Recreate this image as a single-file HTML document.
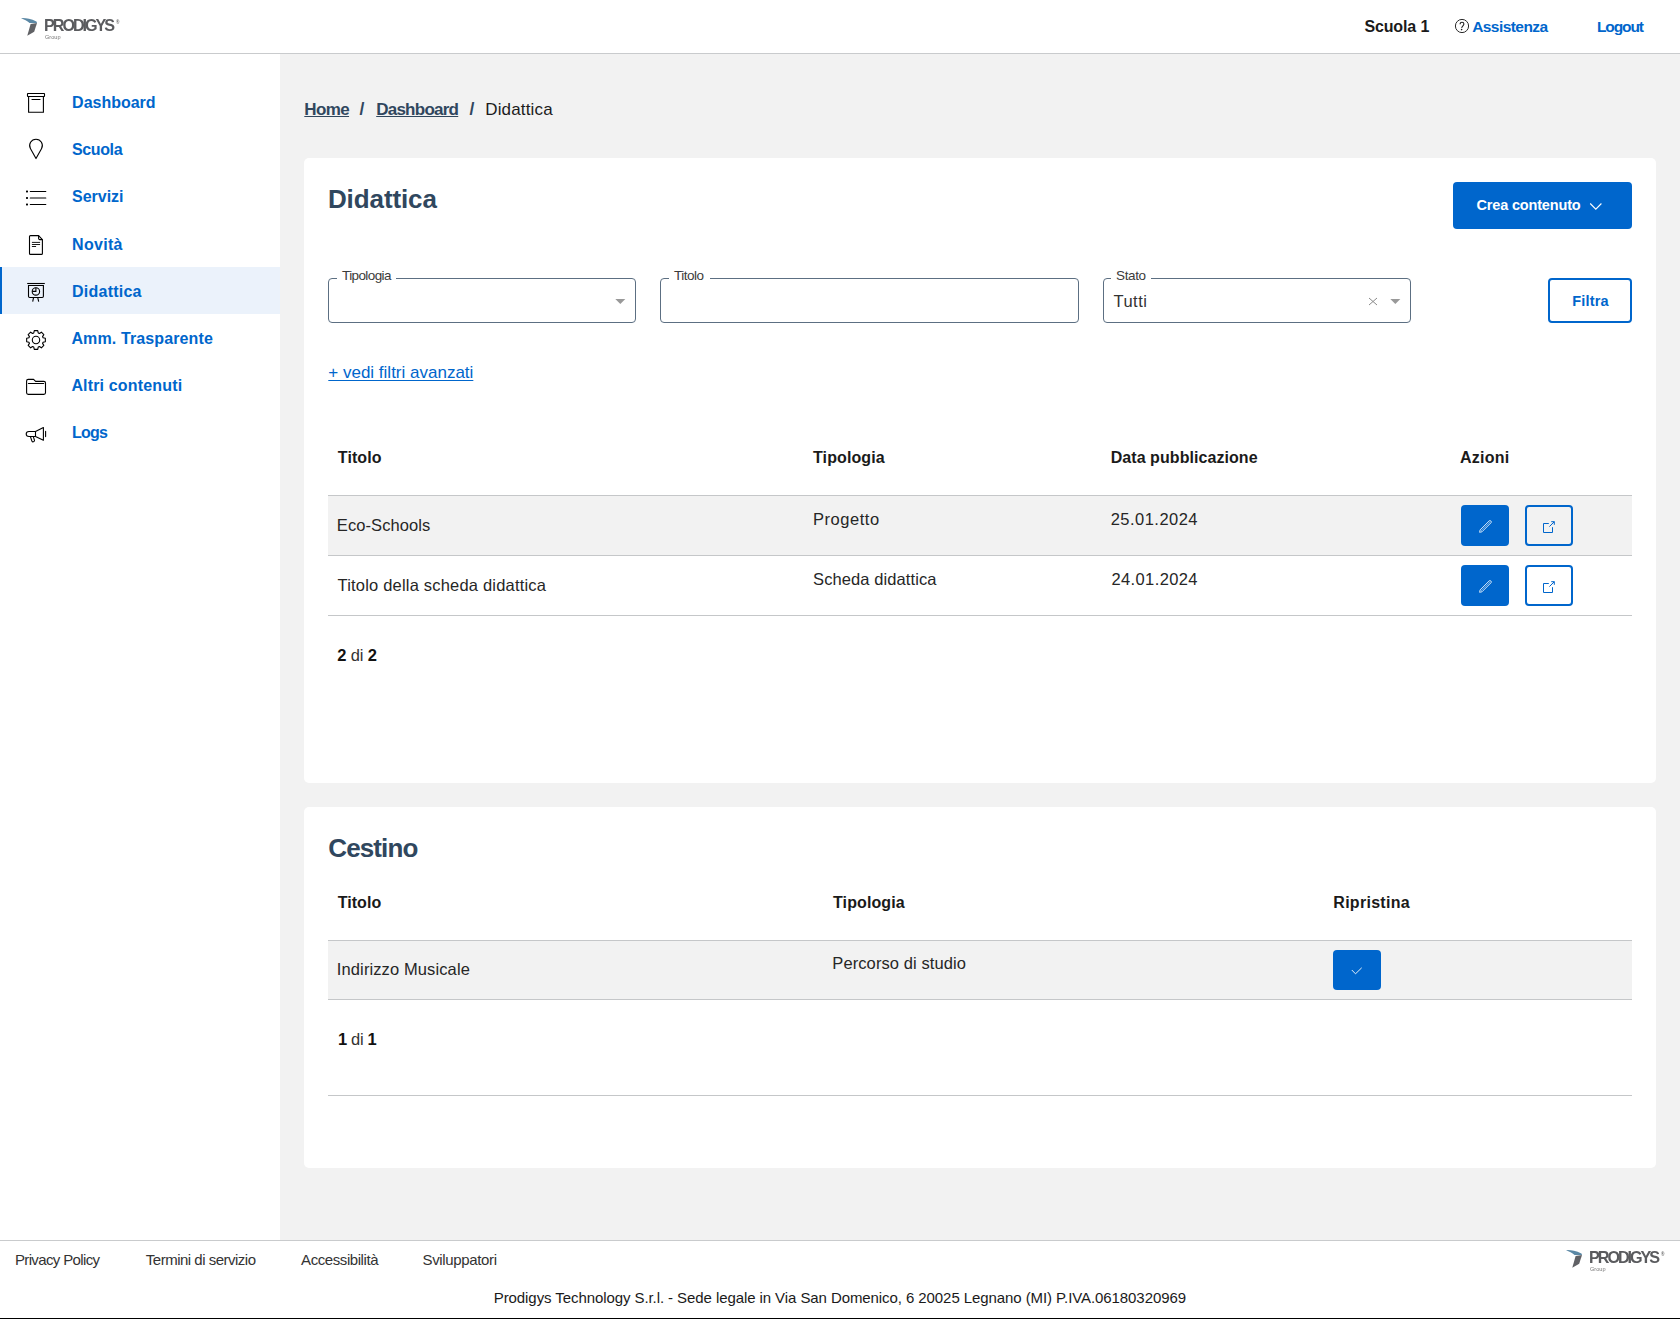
<!DOCTYPE html>
<html lang="it"><head><meta charset="utf-8"><title>Didattica</title><style>
*{margin:0;padding:0;box-sizing:border-box}
html,body{width:1680px;height:1319px;overflow:hidden;background:#fff}
body{font-family:"Liberation Sans",sans-serif;position:relative}
.t{position:absolute;white-space:nowrap}
.a{position:absolute}
.card{position:absolute;background:#fff;border-radius:5px}
.fld{position:absolute;border:1px solid #5c6f82;border-radius:4px;background:#fff}
.notch{position:absolute;background:#fff;height:3px}
.btnf{position:absolute;background:#0066cc;border-radius:4px}
.btno{position:absolute;border:2px solid #0066cc;border-radius:4px}
.hl{position:absolute;height:1px;background:#c5c7c9}
</style></head><body>
<div class="a" style="left:0;top:0;width:1680px;height:53px;background:#fff"></div>
<div class="a" style="left:0;top:53px;width:1680px;height:1px;background:#c9cbcd"></div>
<div class="a" style="left:280px;top:54px;width:1400px;height:1186px;background:#f2f2f2"></div>
<div class="a" style="left:0;top:1240px;width:1680px;height:1px;background:#c9cbcd"></div>
<div class="a" style="left:0;top:1318px;width:1680px;height:1px;background:#000"></div>
<svg class="a" style="left:20px;top:14px;will-change:transform" width="102" height="28" viewBox="-1 -3 102 28"><path d="M0 1.1 C3.5 0.7 9.5 1.6 15.4 4.4 C15.9 4.7 16 5.3 15.9 5.9 L8.6 6.1 C6.2 4.1 3.2 2.6 0 1.1Z" fill="#5b88a5"/><path d="M9.6 6.9 L16 5.9 L13.2 14.8 L6.3 18.7 Z" fill="#606165"/><text x="23.1" y="14" font-family="Liberation Sans" font-weight="700" font-size="16.2" fill="#5a5b5e" textLength="71" lengthAdjust="spacing">PRODIGYS</text><text x="94.9" y="6.9" font-family="Liberation Sans" font-weight="700" font-size="4.6" fill="#6a6a6a">&#174;</text><text x="24" y="21.9" font-family="Liberation Sans" font-size="5.6" fill="#777" textLength="15.6" lengthAdjust="spacingAndGlyphs">Group</text></svg>
<div class="t" style="left:1364.40px;top:17.00px;font-size:16px;line-height:20px;font-weight:700;color:#1a1a1a;letter-spacing:-0.121px;">Scuola 1</div>
<svg class="a" style="left:1454px;top:18px" width="16" height="16" viewBox="0 0 16 16"><circle cx="8" cy="8" r="6.6" fill="none" stroke="#2a2a2a" stroke-width="1"/><path d="M6.1 6.2 C6.1 4.9 7 4.3 8 4.3 C9.1 4.3 9.9 5.1 9.9 6.1 C9.9 7.5 8.1 8 7.6 9.9" fill="none" stroke="#1a1a1a" stroke-width="1.05"/><circle cx="7.6" cy="11.6" r="0.8" fill="#1a1a1a"/></svg>
<div class="t" style="left:1472.17px;top:17.00px;font-size:15.5px;line-height:19px;font-weight:700;color:#0066cc;letter-spacing:-0.556px;">Assistenza</div>
<div class="t" style="left:1596.95px;top:17.01px;font-size:15.5px;line-height:19px;font-weight:700;color:#0066cc;letter-spacing:-1.090px;">Logout</div>
<div class="a" style="left:0;top:267px;width:280px;height:47px;background:#ebf2fb"></div>
<div class="a" style="left:0;top:267px;width:2px;height:47px;background:#0066cc"></div>
<div class="t" style="left:72.10px;top:93.00px;font-size:16px;line-height:20px;font-weight:700;color:#0066cc;letter-spacing:-0.019px;">Dashboard</div>
<div class="t" style="left:72.10px;top:140.00px;font-size:16px;line-height:20px;font-weight:700;color:#0066cc;letter-spacing:-0.400px;">Scuola</div>
<div class="t" style="left:72.10px;top:187.00px;font-size:16px;line-height:20px;font-weight:700;color:#0066cc;letter-spacing:-0.033px;">Servizi</div>
<div class="t" style="left:72.10px;top:235.00px;font-size:16px;line-height:20px;font-weight:700;color:#0066cc;letter-spacing:0.290px;">Novità</div>
<div class="t" style="left:72.10px;top:282.00px;font-size:16px;line-height:20px;font-weight:700;color:#0066cc;letter-spacing:0.219px;">Didattica</div>
<div class="t" style="left:71.40px;top:329.01px;font-size:16px;line-height:20px;font-weight:700;color:#0066cc;letter-spacing:0.120px;">Amm. Trasparente</div>
<div class="t" style="left:71.40px;top:376.00px;font-size:16px;line-height:20px;font-weight:700;color:#0066cc;letter-spacing:0.161px;">Altri contenuti</div>
<div class="t" style="left:72.10px;top:423.01px;font-size:16px;line-height:20px;font-weight:700;color:#0066cc;letter-spacing:-0.833px;">Logs</div>
<svg class="a" style="left:0;top:0" width="60" height="460" viewBox="0 0 60 460"><rect x="27.5" y="93.5" width="17" height="3" rx="0.4" fill="none" stroke="#000" stroke-width="1.1"/><path d="M28.6 96.5 V112.3 H43.4 V96.5" fill="none" stroke="#000" stroke-width="1.1"/><path d="M32 99.5 H40" fill="none" stroke="#000" stroke-width="1.1" stroke-linecap="round"/><path d="M36 158.6 L30.4 148.6 A6.35 6.35 0 1 1 41.6 148.6 Z" fill="none" stroke="#000" stroke-width="1.1" stroke-linejoin="round"/><rect x="26" y="190.6" width="2" height="1.8" rx="0.6" fill="#000"/><rect x="26" y="197.1" width="2" height="1.8" rx="0.6" fill="#000"/><rect x="26" y="203.6" width="2" height="1.8" rx="0.6" fill="#000"/><path d="M30.3 191.5 H45.8 M30.3 198 H45.8 M30.3 204.5 H45.8" fill="none" stroke="#000" stroke-width="1.1" stroke-linecap="round"/><path d="M30.5 235.6 H38.6 L42.4 239.6 V253.4 A1 1 0 0 1 41.4 254.4 H30.5 A1 1 0 0 1 29.5 253.4 V236.6 A1 1 0 0 1 30.5 235.6 Z" fill="none" stroke="#000" stroke-width="1.1" stroke-linejoin="round"/><path d="M38.6 235.6 V238.2 A1.2 1.2 0 0 0 39.8 239.6 H42.4" fill="none" stroke="#000" stroke-width="1.1"/><path d="M32.3 242.4 H39.7 M32.3 244.5 H39.7 M32.3 246.5 H35.7" fill="none" stroke="#000" stroke-width="0.9" stroke-linecap="round"/><path d="M27.2 283.5 H44.8" fill="none" stroke="#000" stroke-width="1.1"/><path d="M28.5 285.5 H43.4 V296.3 A1.2 1.2 0 0 1 42.2 297.5 H29.7 A1.2 1.2 0 0 1 28.5 296.3 Z" fill="none" stroke="#000" stroke-width="1.1"/><circle cx="35.9" cy="291.4" r="3.7" fill="none" stroke="#000" stroke-width="1.1"/><path d="M35.9 287.8 V291.4 H32.3" fill="none" stroke="#000" stroke-width="1.1"/><path d="M33.5 297.8 L32.7 301.6 M37.8 297.8 L38.7 301.6" fill="none" stroke="#000" stroke-width="1.1"/><path d="M33.77 332.94 L34.27 330.66 L37.73 330.66 L38.23 332.94 L39.42 333.44 L41.38 332.17 L43.83 334.62 L42.56 336.58 L43.06 337.77 L45.34 338.27 L45.34 341.73 L43.06 342.23 L42.56 343.42 L43.83 345.38 L41.38 347.83 L39.42 346.56 L38.23 347.06 L37.73 349.34 L34.27 349.34 L33.77 347.06 L32.58 346.56 L30.62 347.83 L28.17 345.38 L29.44 343.42 L28.94 342.23 L26.66 341.73 L26.66 338.27 L28.94 337.77 L29.44 336.58 L28.17 334.62 L30.62 332.17 L32.58 333.44Z" fill="none" stroke="#000" stroke-width="1.1" stroke-linejoin="round"/><circle cx="36" cy="340" r="3.7" fill="none" stroke="#000" stroke-width="1.1"/><path d="M26.6 381 A1.6 1.6 0 0 1 28.2 379.4 H33.6 L35.6 381.4 H43.9 A1.6 1.6 0 0 1 45.5 383 V392.8 A1.6 1.6 0 0 1 43.9 394.4 H28.2 A1.6 1.6 0 0 1 26.6 392.8 Z" fill="none" stroke="#000" stroke-width="1.1" stroke-linejoin="round"/><path d="M28.4 383.5 H43.7" fill="none" stroke="#000" stroke-width="1.1" stroke-linecap="round"/><path d="M35.5 431.5 L43.4 427.5 V440.3 L35.5 436.5 Z" fill="none" stroke="#000" stroke-width="1.1" stroke-linejoin="round"/><path d="M35.5 431.5 H29 A2.8 2.5 0 0 0 29 436.5 H35.5" fill="none" stroke="#000" stroke-width="1.1"/><path d="M45.6 431.4 V436.6" fill="none" stroke="#000" stroke-width="1.1" stroke-linecap="round"/><path d="M30.5 436.8 L31.9 441 A1.35 1.35 0 0 0 34.5 440.4 L33.4 436.8" fill="none" stroke="#000" stroke-width="1.1"/></svg>
<div class="t" style="left:304.30px;top:99.01px;font-size:17px;line-height:21px;font-weight:700;color:#30475e;letter-spacing:-0.617px;text-decoration:underline;text-underline-offset:1px;text-decoration-thickness:1px;">Home</div>
<div class="t" style="left:359.50px;top:98.01px;font-size:17.5px;line-height:22px;font-weight:700;color:#30475e;">/</div>
<div class="t" style="left:376.20px;top:99.01px;font-size:17px;line-height:21px;font-weight:700;color:#30475e;letter-spacing:-0.750px;text-decoration:underline;text-underline-offset:1px;text-decoration-thickness:1px;">Dashboard</div>
<div class="t" style="left:469.50px;top:98.01px;font-size:17.5px;line-height:22px;font-weight:700;color:#30475e;">/</div>
<div class="t" style="left:485.25px;top:99.01px;font-size:17px;line-height:21px;color:#1c1c1c;letter-spacing:0.156px;">Didattica</div>
<div class="card" style="left:304px;top:158px;width:1352px;height:625px"></div>
<div class="t" style="left:327.95px;top:183.02px;font-size:26px;line-height:32px;font-weight:700;color:#30475e;letter-spacing:-0.100px;">Didattica</div>
<div class="btnf" style="left:1453px;top:182px;width:179px;height:47px"></div>
<div class="t" style="left:1476.55px;top:196.01px;font-size:14.5px;line-height:18px;font-weight:700;color:#fff;letter-spacing:-0.173px;">Crea contenuto</div>
<svg class="a" style="left:1589px;top:202px" width="14" height="9" viewBox="0 0 14 9"><path d="M1.2 1.5 L6.8 7.2 L12.4 1.5" fill="none" stroke="#fff" stroke-width="1.1"/></svg>
<div class="fld" style="left:328px;top:278px;width:308px;height:45px"></div>
<div class="notch" style="left:337px;top:277px;width:59px"></div>
<div class="t" style="left:342.00px;top:267.00px;font-size:13.5px;line-height:17px;color:#3b3b3b;letter-spacing:-0.600px;">Tipologia</div>
<div class="fld" style="left:660px;top:278px;width:419px;height:45px"></div>
<div class="notch" style="left:669px;top:277px;width:41px"></div>
<div class="t" style="left:674.00px;top:267.00px;font-size:13.5px;line-height:17px;color:#3b3b3b;letter-spacing:-0.500px;">Titolo</div>
<div class="fld" style="left:1103px;top:278px;width:308px;height:45px"></div>
<div class="notch" style="left:1111px;top:277px;width:40px"></div>
<div class="t" style="left:1116.10px;top:267.00px;font-size:13.5px;line-height:17px;color:#3b3b3b;letter-spacing:-0.388px;">Stato</div>
<svg class="a" style="left:614.5px;top:298px" width="11" height="7" viewBox="0 0 11 7"><path d="M0.3 1 H10.3 L5.3 6 Z" fill="#999"/></svg>
<svg class="a" style="left:1389.5px;top:298px" width="11" height="7" viewBox="0 0 11 7"><path d="M0.3 1 H10.3 L5.3 6 Z" fill="#999"/></svg>
<svg class="a" style="left:1368px;top:297px" width="10" height="9" viewBox="0 0 10 9"><path d="M1 1 L9 8 M9 1 L1 8" fill="none" stroke="#8a8a8a" stroke-width="1"/></svg>
<div class="t" style="left:1113.50px;top:291.00px;font-size:16.5px;line-height:21px;color:#333;letter-spacing:0.475px;">Tutti</div>
<div class="btno" style="left:1548px;top:278px;width:84px;height:45px"></div>
<div class="t" style="left:1572.30px;top:292.01px;font-size:14.5px;line-height:18px;font-weight:700;color:#0066cc;letter-spacing:0.160px;">Filtra</div>
<div class="t" style="left:328.30px;top:362.00px;font-size:17px;line-height:21px;color:#0066cc;text-decoration:underline;text-underline-offset:2px;text-decoration-thickness:1px;">+ vedi filtri avanzati</div>
<div class="t" style="left:337.85px;top:448.00px;font-size:16px;line-height:20px;font-weight:700;color:#1a1a1a;letter-spacing:0.070px;">Titolo</div>
<div class="t" style="left:813.00px;top:448.00px;font-size:16px;line-height:20px;font-weight:700;color:#1a1a1a;letter-spacing:0.100px;">Tipologia</div>
<div class="t" style="left:1110.70px;top:448.00px;font-size:16px;line-height:20px;font-weight:700;color:#1a1a1a;letter-spacing:0.062px;">Data pubblicazione</div>
<div class="t" style="left:1460.00px;top:448.00px;font-size:16px;line-height:20px;font-weight:700;color:#1a1a1a;letter-spacing:0.260px;">Azioni</div>
<div class="a" style="left:328px;top:496px;width:1304px;height:59px;background:#f2f2f2"></div>
<div class="hl" style="left:328px;top:495px;width:1304px"></div>
<div class="hl" style="left:328px;top:555px;width:1304px"></div>
<div class="hl" style="left:328px;top:615px;width:1304px"></div>
<div class="t" style="left:336.85px;top:515.01px;font-size:16.5px;line-height:21px;color:#262626;letter-spacing:0.075px;">Eco-Schools</div>
<div class="t" style="left:813.10px;top:509.02px;font-size:16.5px;line-height:21px;color:#262626;letter-spacing:0.514px;">Progetto</div>
<div class="t" style="left:1110.70px;top:509.02px;font-size:16.5px;line-height:21px;color:#262626;letter-spacing:0.472px;">25.01.2024</div>
<div class="btnf" style="left:1461px;top:505px;width:48px;height:41px"></div>
<svg class="a" style="left:1478px;top:519px" width="16" height="16" viewBox="0 0 16 16"><path d="M1.6 13.3 L2.1 10.9 L11.1 1.9 A1.35 1.35 0 0 1 13 3.8 L4 12.8 Z" fill="none" stroke="#fff" stroke-width="0.8" stroke-linejoin="round"/><path d="M3.05 11.85 L12.05 2.85" fill="none" stroke="#fff" stroke-width="0.7" stroke-opacity="0.7"/></svg>
<div class="btno" style="left:1525px;top:505px;width:48px;height:41px"></div>
<svg class="a" style="left:1542px;top:519px" width="14" height="14" viewBox="0 0 14 14"><path d="M6.8 4.5 H1.5 V13.5 H10.5 V8.2" fill="none" stroke="#0066cc" stroke-width="1"/><path d="M7.4 7.6 L12.3 2.7 M9.2 2.7 H12.3 V5.8" fill="none" stroke="#0066cc" stroke-width="1"/></svg>
<div class="t" style="left:337.55px;top:575.00px;font-size:16.5px;line-height:21px;color:#262626;letter-spacing:0.191px;">Titolo della scheda didattica</div>
<div class="t" style="left:813.10px;top:569.01px;font-size:16.5px;line-height:21px;color:#262626;letter-spacing:0.090px;">Scheda didattica</div>
<div class="t" style="left:1111.40px;top:569.01px;font-size:16.5px;line-height:21px;color:#262626;letter-spacing:0.394px;">24.01.2024</div>
<div class="btnf" style="left:1461px;top:565px;width:48px;height:41px"></div>
<svg class="a" style="left:1478px;top:579px" width="16" height="16" viewBox="0 0 16 16"><path d="M1.6 13.3 L2.1 10.9 L11.1 1.9 A1.35 1.35 0 0 1 13 3.8 L4 12.8 Z" fill="none" stroke="#fff" stroke-width="0.8" stroke-linejoin="round"/><path d="M3.05 11.85 L12.05 2.85" fill="none" stroke="#fff" stroke-width="0.7" stroke-opacity="0.7"/></svg>
<div class="btno" style="left:1525px;top:565px;width:48px;height:41px"></div>
<svg class="a" style="left:1542px;top:579px" width="14" height="14" viewBox="0 0 14 14"><path d="M6.8 4.5 H1.5 V13.5 H10.5 V8.2" fill="none" stroke="#0066cc" stroke-width="1"/><path d="M7.4 7.6 L12.3 2.7 M9.2 2.7 H12.3 V5.8" fill="none" stroke="#0066cc" stroke-width="1"/></svg>
<div class="t" style="left:337.2px;top:645px;font-size:16.5px;line-height:20px;color:#333;letter-spacing:-0.15px"><b style="color:#111">2</b> di <b style="color:#111">2</b></div>
<div class="card" style="left:304px;top:807px;width:1352px;height:361px"></div>
<div class="t" style="left:328.30px;top:832.00px;font-size:26px;line-height:32px;font-weight:700;color:#30475e;letter-spacing:-0.892px;">Cestino</div>
<div class="t" style="left:337.65px;top:893.00px;font-size:16px;line-height:20px;font-weight:700;color:#1a1a1a;letter-spacing:0.070px;">Titolo</div>
<div class="t" style="left:833.00px;top:893.00px;font-size:16px;line-height:20px;font-weight:700;color:#1a1a1a;letter-spacing:0.100px;">Tipologia</div>
<div class="t" style="left:1333.30px;top:893.00px;font-size:16px;line-height:20px;font-weight:700;color:#1a1a1a;letter-spacing:0.278px;">Ripristina</div>
<div class="a" style="left:328px;top:941px;width:1304px;height:58px;background:#f2f2f2"></div>
<div class="hl" style="left:328px;top:940px;width:1304px"></div>
<div class="hl" style="left:328px;top:999px;width:1304px"></div>
<div class="hl" style="left:328px;top:1095px;width:1304px"></div>
<div class="t" style="left:336.85px;top:959.00px;font-size:16.5px;line-height:21px;color:#262626;letter-spacing:0.109px;">Indirizzo Musicale</div>
<div class="t" style="left:832.30px;top:953.02px;font-size:16.5px;line-height:21px;color:#262626;letter-spacing:0.097px;">Percorso di studio</div>
<div class="btnf" style="left:1333px;top:950px;width:48px;height:40px"></div>
<svg class="a" style="left:1350px;top:966px" width="14" height="10" viewBox="0 0 14 10"><path d="M1.8 4 L5.5 7.8 L11.7 1.8" fill="none" stroke="#fff" stroke-width="0.9"/></svg>
<div class="t" style="left:338px;top:1029px;font-size:16.5px;line-height:20px;color:#333;letter-spacing:-0.35px"><b style="color:#111">1</b> di <b style="color:#111">1</b></div>
<div class="t" style="left:14.95px;top:1250.02px;font-size:15px;line-height:19px;color:#333;letter-spacing:-0.638px;">Privacy Policy</div>
<div class="t" style="left:145.85px;top:1250.02px;font-size:15px;line-height:19px;color:#333;letter-spacing:-0.503px;">Termini di servizio</div>
<div class="t" style="left:301.10px;top:1250.02px;font-size:15px;line-height:19px;color:#333;letter-spacing:-0.425px;">Accessibilità</div>
<div class="t" style="left:422.50px;top:1250.02px;font-size:15px;line-height:19px;color:#333;letter-spacing:-0.345px;">Sviluppatori</div>
<svg class="a" style="left:1565px;top:1246px;will-change:transform" width="102" height="28" viewBox="-1 -3 102 28"><path d="M0 1.1 C3.5 0.7 9.5 1.6 15.4 4.4 C15.9 4.7 16 5.3 15.9 5.9 L8.6 6.1 C6.2 4.1 3.2 2.6 0 1.1Z" fill="#5b88a5"/><path d="M9.6 6.9 L16 5.9 L13.2 14.8 L6.3 18.7 Z" fill="#606165"/><text x="23.1" y="14" font-family="Liberation Sans" font-weight="700" font-size="16.2" fill="#5a5b5e" textLength="71" lengthAdjust="spacing">PRODIGYS</text><text x="94.9" y="6.9" font-family="Liberation Sans" font-weight="700" font-size="4.6" fill="#6a6a6a">&#174;</text><text x="24" y="21.9" font-family="Liberation Sans" font-size="5.6" fill="#777" textLength="15.6" lengthAdjust="spacingAndGlyphs">Group</text></svg>
<div class="t" style="left:493.75px;top:1288.02px;font-size:15px;line-height:19px;color:#1a1a1a;letter-spacing:-0.080px;">Prodigys Technology S.r.l. - Sede legale in Via San Domenico, 6 20025 Legnano (MI) P.IVA.06180320969</div>
</body></html>
